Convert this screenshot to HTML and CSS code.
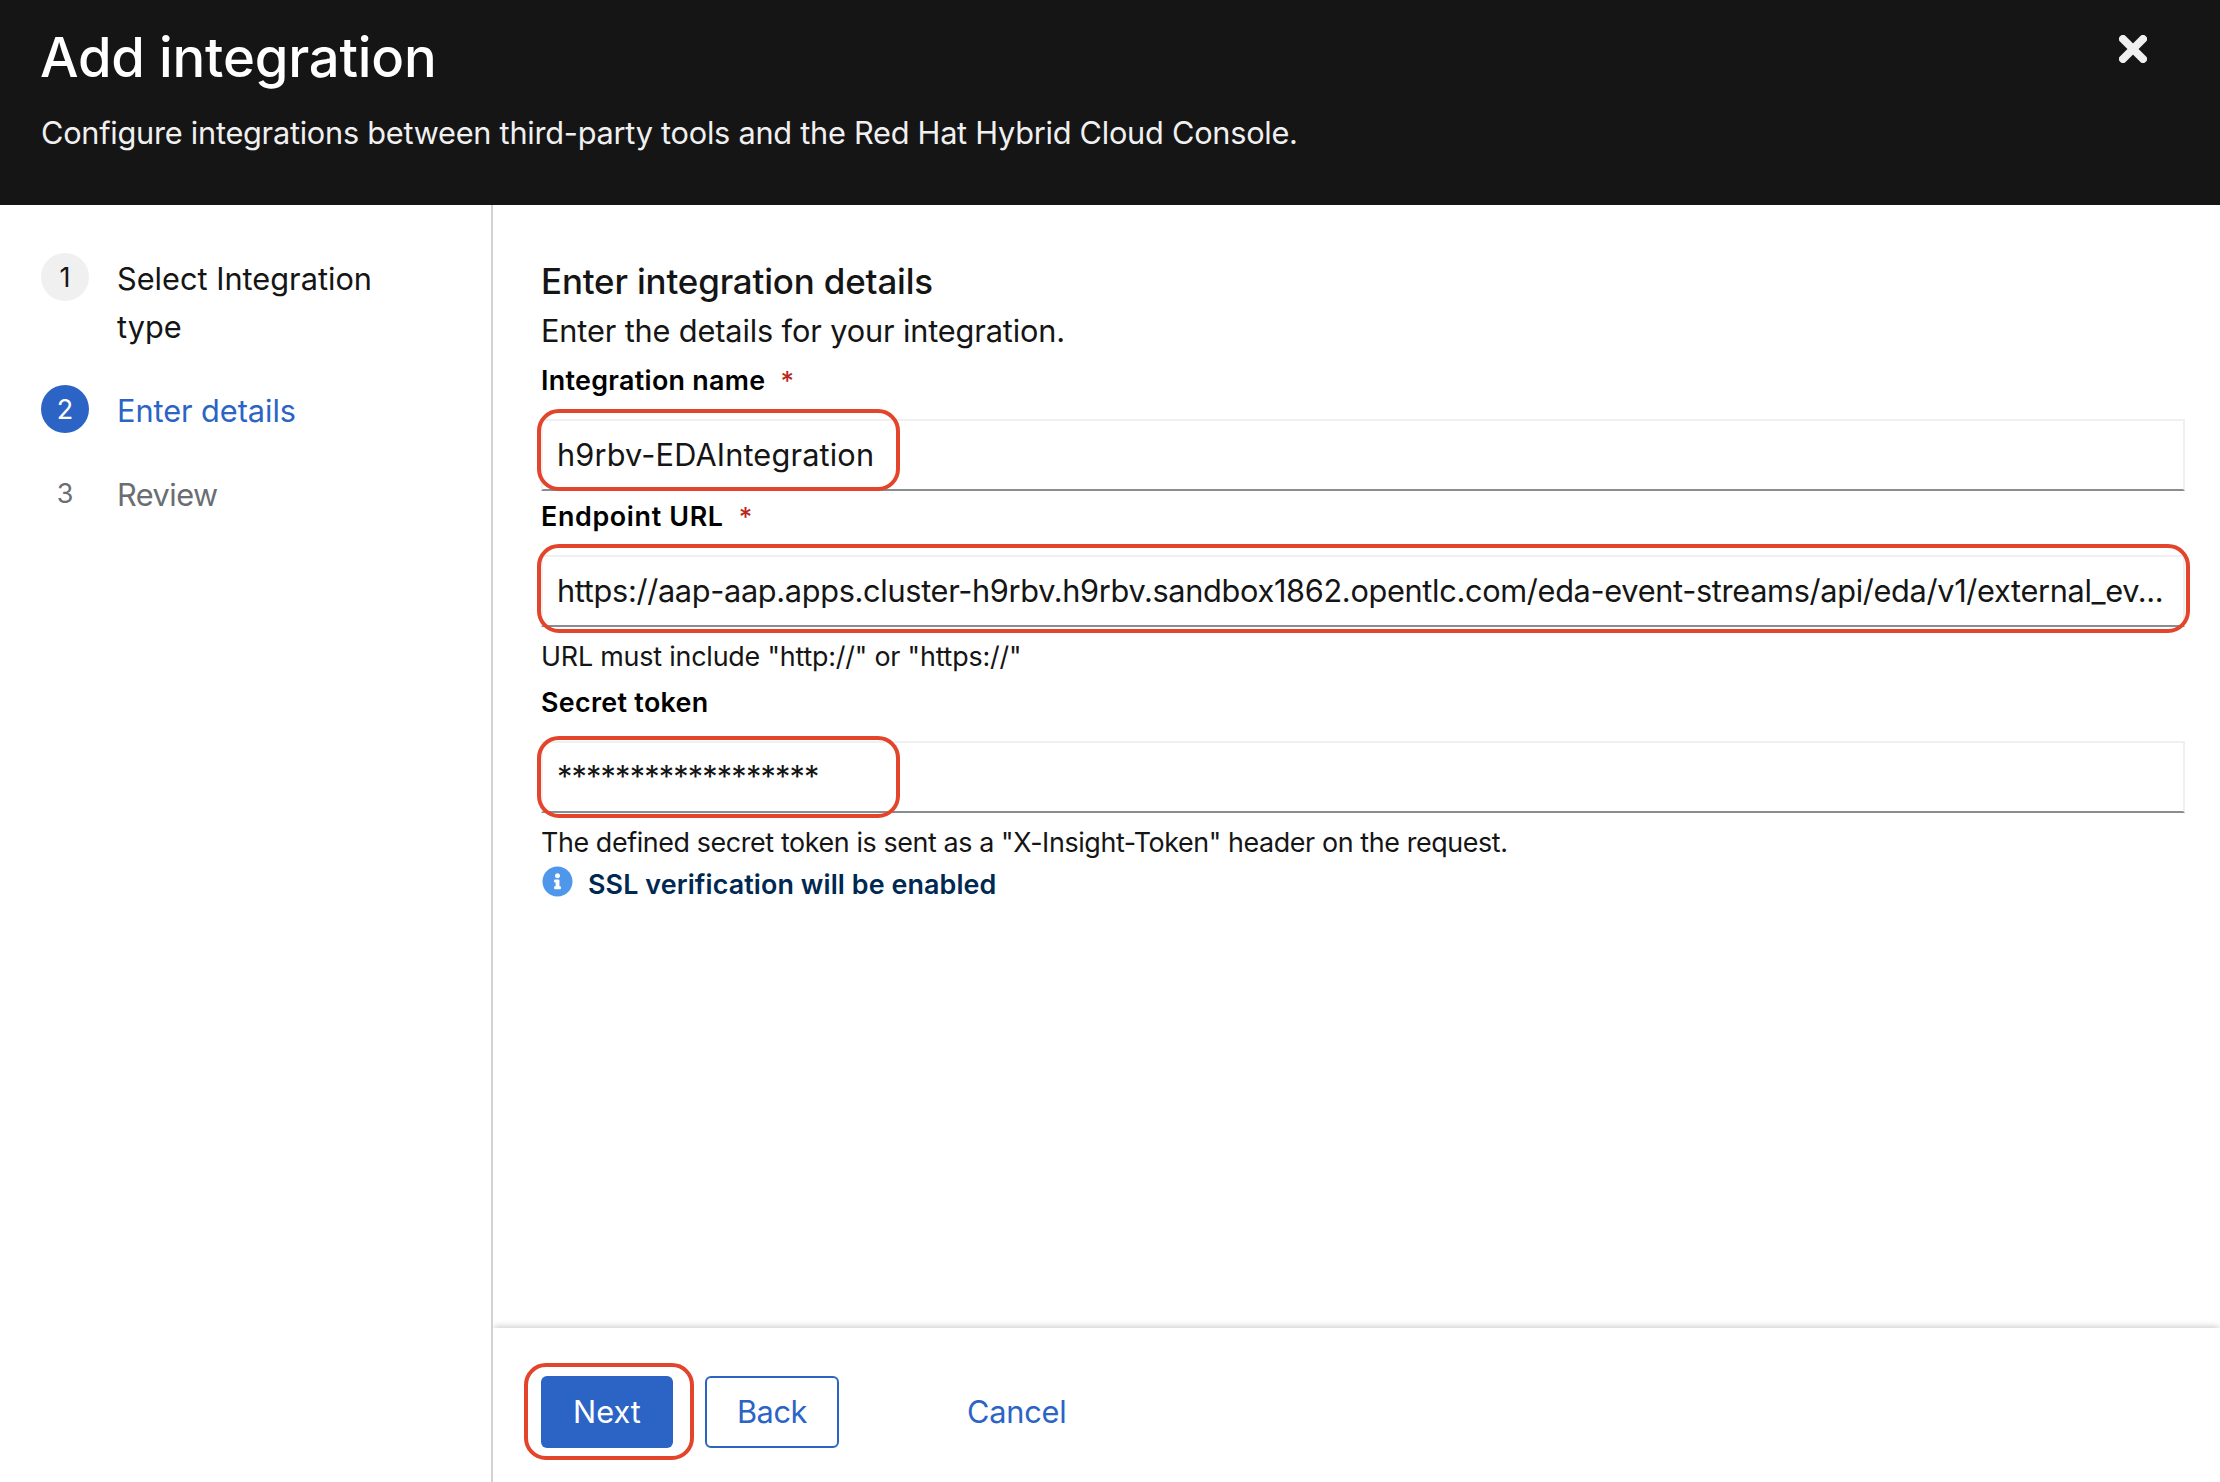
FILE: index.html
```html
<!DOCTYPE html>
<html lang="en">
<head>
<meta charset="utf-8">
<title>Add integration</title>
<link rel="stylesheet" href="styles.css">
</head>
<body>
<div class="wizard">
  <header class="header">
    <div>
      <h1 class="title">Add integration</h1>
      <p class="subtitle">Configure integrations between third-party tools and the Red Hat Hybrid Cloud Console.</p>
    </div>
    <button class="close" aria-label="Close">
      <svg width="28" height="28" viewBox="0 0 28 28"><path d="M4 4 24 24M24 4 4 24" stroke="#f0f0f0" stroke-width="8" stroke-linecap="round"/></svg>
    </button>
  </header>
  <div class="body">
    <nav class="nav">
      <ol class="steps">
        <li class="step"><span class="num num-done">1</span><span class="step-label">Select Integration type</span></li>
        <li class="step step-current"><span class="num num-current">2</span><span class="step-label">Enter details</span></li>
        <li class="step step-disabled"><span class="num">3</span><span class="step-label label-review">Review</span></li>
      </ol>
    </nav>
    <div class="content">
      <main class="main">
        <h2 class="heading">Enter integration details</h2>
        <p class="desc">Enter the details for your integration.</p>

        <label class="label" for="name">Integration name<span class="required">*</span></label>
        <div class="field">
          <input class="input input-name" id="name" type="text" value="h9rbv-EDAIntegration" readonly>
          <span class="mark mark-name"></span>
        </div>

        <label class="label label-url" for="url">Endpoint URL<span class="required">*</span></label>
        <div class="field">
          <input class="input input-url" id="url" type="text" value="https://aap-aap.apps.cluster-h9rbv.h9rbv.sandbox1862.opentlc.com/eda-event-streams/api/eda/v1/external_ev..." readonly>
          <span class="mark mark-url"></span>
        </div>
        <p class="helper helper-url">URL must include "http://" or "https://"</p>

        <label class="label label-token" for="token">Secret token</label>
        <div class="field">
          <input class="input input-token" id="token" type="text" value="******************" readonly>
          <span class="mark mark-token"></span>
        </div>
        <p class="helper helper-token">The defined secret token is sent as a "X-Insight-Token" header on the request.</p>

        <div class="alert">
          <svg class="alert-icon" width="31" height="31" viewBox="0 0 512 512"><path fill="#4f97ea" d="M256 8C119 8 8 119 8 256s111 248 248 248 248-111 248-248S393 8 256 8zm0 110c23.200 0 42 18.800 42 42s-18.800 42-42 42-42-18.800-42-42 18.800-42 42-42zm56 254c0 6.600-5.400 12-12 12h-88c-6.600 0-12-5.400-12-12v-24c0-6.600 5.400-12 12-12h12v-64h-12c-6.600 0-12-5.400-12-12v-24c0-6.600 5.400-12 12-12h64c6.600 0 12 5.400 12 12v100h12c6.600 0 12 5.400 12 12v24z"/></svg>
          <span class="alert-title">SSL verification will be enabled</span>
        </div>
      </main>
      <footer class="footer">
        <div class="next-wrap">
          <button class="btn btn-primary">Next</button>
          <span class="mark mark-next"></span>
        </div>
        <button class="btn btn-secondary">Back</button>
        <button class="btn btn-link">Cancel</button>
      </footer>
    </div>
  </div>
</div>
</body>
</html>
```
FILE: styles.css
```css
* {
  box-sizing: border-box;
  margin: 0;
  padding: 0;
}

body {
  font-family: Inter, "Liberation Sans", sans-serif;
  font-size: 30.72px;
  line-height: 48px;
  color: #151515;
  background: #fff;
  font-feature-settings: "calt" 0;
}

button,
input {
  font: inherit;
  font-feature-settings: inherit;
  color: inherit;
}

.wizard {
  display: flex;
  flex-direction: column;
  height: 100vh;
  overflow: hidden;
}

.header {
  display: flex;
  justify-content: space-between;
  align-items: flex-start;
  height: 205px;
  flex: none;
  padding: 21px 73px 0 40px;
  background: #151515;
  color: #fff;
}

.title {
  font-size: 54.4px;
  font-weight: 500;
  line-height: 72px;
  letter-spacing: -0.2px;
}

.subtitle {
  margin: 16px 0 0 1px;
  color: #f0f0f0;
  letter-spacing: -0.26px;
}

.close {
  display: flex;
  margin-top: 14px;
  background: none;
  border: 0;
}

.body {
  display: flex;
  flex: 1;
  min-height: 0;
}

.nav {
  width: 493px;
  flex: none;
  padding: 48px 100px 0 41px;
  border-right: 2px solid #d2d2d2;
}

.steps {
  display: flex;
  flex-direction: column;
  gap: 34px;
  list-style: none;
}

.step {
  display: flex;
  align-items: flex-start;
  gap: 28px;
}

.step-label {
  padding-top: 2px;
}

.label-review {
  letter-spacing: -0.54px;
}

.step-current .step-label {
  color: #2b64c5;
  letter-spacing: -0.06px;
}

.step-disabled {
  color: #6a6e73;
}

.num {
  flex: none;
  width: 48px;
  height: 48px;
  border-radius: 50%;
  font-size: 27px;
  line-height: 50px;
  text-align: center;
}

.num-done {
  background: #f0f0f0;
}

.num-current {
  background: #2b64c5;
  color: #fff;
}

.content {
  display: flex;
  flex-direction: column;
  flex: 1;
  min-width: 0;
}

.main {
  flex: 1;
  padding: 52px 35px 0 48px;
}

.heading {
  font-size: 34.9px;
  font-weight: 500;
  letter-spacing: -0.15px;
}

.desc {
  margin: 2px 0 5px;
  letter-spacing: -0.14px;
}

.label {
  display: block;
  margin-bottom: 19px;
  font-size: 26.88px;
  font-weight: 600;
  line-height: 40px;
  letter-spacing: 0.3px;
  color: #000;
}

.label-url {
  margin-top: 5px;
  letter-spacing: 0.65px;
}

.label-token {
  margin-top: 6px;
}

.required {
  margin-left: 15px;
  font-size: 26px;
  font-weight: 500;
  line-height: 1;
  letter-spacing: 0;
  color: #b8281b;
}

.field {
  position: relative;
  height: 72px;
}

.input {
  display: block;
  width: 100%;
  height: 72px;
  padding: 0 12px 2px 14px;
  border: 2px solid #f0f0f0;
  border-bottom-color: #8a8d90;
  border-radius: 0;
  background: #fff;
  outline: 0;
}

.input-name {
  letter-spacing: 0.15px;
}

.input-url {
  letter-spacing: -0.33px;
}

.input-token {
  letter-spacing: -0.86px;
}

/* Rounded call-out frames drawn over the controls */
.mark {
  position: absolute;
  border: 4px solid #e2452c;
  border-radius: 22px;
  pointer-events: none;
}

.mark-name {
  left: -4px;
  top: -10px;
  width: 363px;
  height: 82px;
}

.mark-url {
  left: -4px;
  top: -11px;
  width: 1653px;
  height: 89px;
}

.mark-token {
  left: -4px;
  top: -5px;
  width: 363px;
  height: 82px;
}

.mark-next {
  left: -17px;
  top: -13px;
  width: 170px;
  height: 97px;
}

.helper {
  margin-top: 9px;
  font-size: 26.88px;
  line-height: 40px;
}

.helper-url {
  letter-spacing: -0.2px;
}

.helper-token {
  letter-spacing: -0.4px;
}

.alert {
  display: flex;
  align-items: flex-start;
  gap: 16px;
  margin-top: 2px;
  font-size: 26.88px;
  font-weight: 600;
  line-height: 40px;
  color: #002952;
}

.alert-icon {
  flex: none;
  margin: 2px -1px 0 1px;
}

.alert-title {
  letter-spacing: 0.1px;
}

.footer {
  display: flex;
  align-items: flex-start;
  height: 154px;
  flex: none;
  padding: 48px 48px 0;
  background: #fff;
  box-shadow: 0 -3px 6px -1px rgba(3, 3, 3, 0.18);
  clip-path: inset(-20px 0 0 0);
}

.next-wrap {
  position: relative;
  margin-right: 32px;
}

.btn {
  display: block;
  height: 72px;
  border: 0;
  border-radius: 6px;
  background: none;
  line-height: 72px;
  text-align: center;
}

.btn-primary {
  width: 132px;
  background: #2b64c5;
  color: #fff;
}

.btn-secondary {
  width: 134px;
  border: 2px solid #2b64c5;
  line-height: 68px;
  color: #2b64c5;
  letter-spacing: -0.4px;
}

.btn-link {
  margin-left: 96px;
  padding: 0 32px;
  color: #2b64c5;
  letter-spacing: -0.2px;
}
```
